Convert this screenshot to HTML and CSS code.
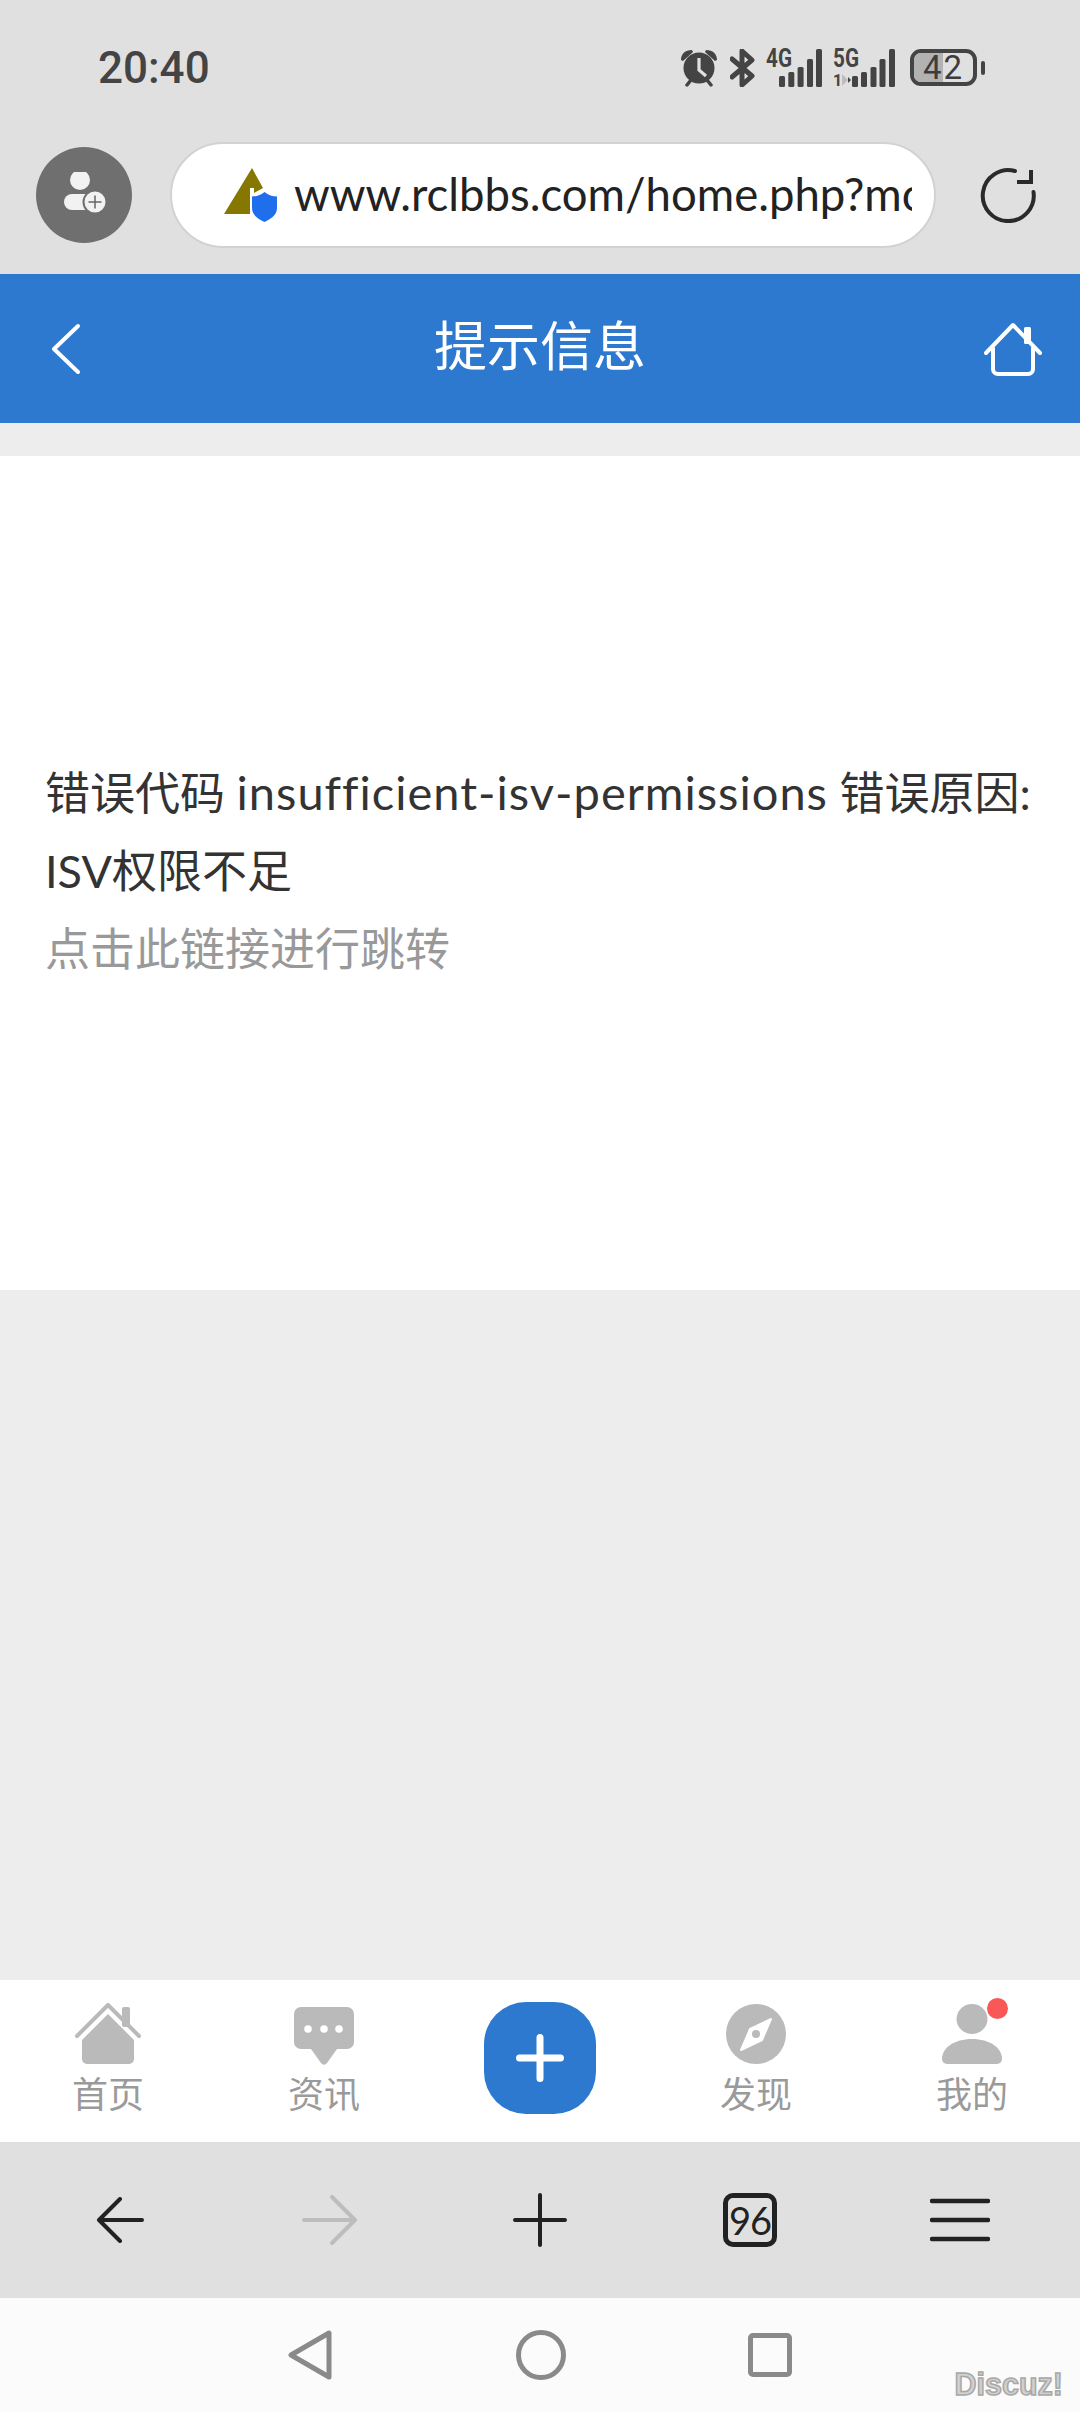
FILE: index.html
```html
<!DOCTYPE html>
<html lang="zh-CN">
<head>
<meta charset="utf-8">
<title>提示信息</title>
<link rel="stylesheet" href="styles.css">
</head>
<body>
<div class="screen">
  <header class="chrome">
    <div class="status">
      <span class="time">20:40</span>
      <div class="status-icons">
        <svg class="i-alarm" width="38" height="38" viewBox="0 0 38 38"><circle cx="19" cy="19" r="15.500" fill="#444"/><path d="M1 11C1 5 5 1 12 1L13 3L3 12ZM37 11C37 5 33 1 26 1L25 3L35 12Z" fill="#444"/><path d="M7 36l4-5M31 36l-4-5" stroke="#444" stroke-width="3.500" stroke-linecap="round"/><path d="M19 9V21L26 27" fill="none" stroke="#e0e0e0" stroke-width="3.200"/></svg>
        <svg width="25" height="38" viewBox="0 0 25 38"><path d="M2 10L22 27L12 36V2L22 11L2 28" fill="none" stroke="#444" stroke-width="5" stroke-linejoin="round" stroke-linecap="round"/></svg>
        <svg class="i-net" width="56" height="38" viewBox="0 0 56 38"><text x="0" y="18" class="net-label" textLength="26" lengthAdjust="spacingAndGlyphs">4G</text><rect x="13" y="27" width="6" height="11" rx="1.500"/><rect x="22.300" y="23" width="6" height="15" rx="1.500"/><rect x="31.600" y="18" width="6" height="20" rx="1.500"/><rect x="41" y="10" width="6" height="28" rx="1.500"/><rect x="50" y="0" width="6" height="38" rx="1.500"/></svg>
        <svg class="i-net" width="62" height="38" viewBox="0 0 62 38"><text x="0" y="18" class="net-label" textLength="26" lengthAdjust="spacingAndGlyphs">5G</text><text x="0" y="37" class="net-sub">1</text><path d="M9 25l6 6-6 6z" fill="#bdbdbd"/><path d="M15 28l3 3-3 3z" fill="#444"/><rect x="19" y="27" width="6" height="11" rx="1.500"/><rect x="28" y="23" width="6" height="15" rx="1.500"/><rect x="37.500" y="18" width="6" height="20" rx="1.500"/><rect x="46.500" y="10" width="6" height="28" rx="1.500"/><rect x="56" y="0" width="6" height="38" rx="1.500"/></svg>
        <div class="battery">
          <div class="battery-body"><span class="battery-fill"></span><span class="battery-num">42</span></div>
          <span class="battery-nub"></span>
        </div>
      </div>
    </div>
    <div class="urlrow">
      <div class="avatar">
        <svg width="48" height="46" viewBox="0 0 48 46"><circle cx="20" cy="8" r="10" fill="#f2f2f2"/><rect x="4" y="22" width="30" height="16" rx="8" fill="#f2f2f2"/><circle cx="35" cy="30" r="11.500" fill="#f2f2f2" stroke="#6f6f6f" stroke-width="2"/><path d="M35 23.500v13M28.500 30h13" stroke="#666" stroke-width="1.500"/></svg>
      </div>
      <div class="pill">
        <svg class="favicon" width="54" height="56" viewBox="0 0 54 56"><path d="M28 0L39 20L30 25V20H26V46H0Z" fill="#857700"/><path d="M40.500 24C44 27 49 28.500 53 28.500V40C53 47 47 51 40.500 54C34 51 28 47 28 40V28.500C32 28.500 37 27 40.500 24Z" fill="#1f6fec"/></svg>
        <span class="url">www.rclbbs.com/home.php?mod</span>
      </div>
      <svg class="reload" width="56" height="56" viewBox="0 0 56 56"><path d="M35 4A25.500 25.500 0 1 0 53.500 25" fill="none" stroke="#2a2a2a" stroke-width="4" stroke-linecap="round"/><path d="M37 15H51V3" fill="none" stroke="#2a2a2a" stroke-width="4"/></svg>
    </div>
  </header>

  <div class="appbar">
    <svg class="appbar-back" width="30" height="52" viewBox="0 0 30 52"><path d="M27 3L3 26L27 49" fill="none" stroke="#fff" stroke-width="4" stroke-linecap="round" stroke-linejoin="round"/></svg>
    <h1 class="title">提示信息</h1>
    <svg class="appbar-home" width="58" height="54" viewBox="0 0 58 54"><path d="M2 31L29 3L56 31M9 26V47a5 5 0 0 0 5 5H44a5 5 0 0 0 5-5V26" fill="none" stroke="#fff" stroke-width="4" stroke-linecap="round" stroke-linejoin="round"/><rect x="40" y="5" width="7" height="17" rx="1.500" fill="#fff"/></svg>
  </div>

  <main class="content">
    <section class="message">
      <p class="msg-text">错误代码 <span class="latin">insufficient-isv-permissions</span> 错误原因: ISV权限不足</p>
      <a class="msg-link">点击此链接进行跳转</a>
    </section>
  </main>

  <nav class="tabs">
    <div class="tab">
      <svg width="66" height="62" viewBox="0 0 66 62"><path d="M2 33L33 2L64 33" fill="none" stroke="#bababa" stroke-width="4" stroke-linecap="round" stroke-linejoin="round"/><rect x="47" y="4" width="8" height="20" rx="2" fill="#bababa"/><path d="M33 11L59 37V56a5 5 0 0 1-5 5H12a5 5 0 0 1-5-5V37Z" fill="#bababa"/></svg>
      <span class="tab-label">首页</span>
    </div>
    <div class="tab">
      <svg width="62" height="62" viewBox="0 0 62 62"><path d="M8 4H54a7 7 0 0 1 7 7V39a7 7 0 0 1-7 7H44L34 60a3.500 3.500 0 0 1-6 0L18 46H8a7 7 0 0 1-7-7V11a7 7 0 0 1 7-7Z" fill="#bababa"/><circle cx="15" cy="26" r="3.800" fill="#fff"/><circle cx="31" cy="26" r="3.800" fill="#fff"/><circle cx="46" cy="26" r="3.800" fill="#fff"/></svg>
      <span class="tab-label">资讯</span>
    </div>
    <div class="tab tab-plus">
      <div class="plus-btn"><svg width="48" height="48" viewBox="0 0 48 48"><path d="M3.500 24H44.500M24 3.500V44.500" stroke="#fff" stroke-width="7" stroke-linecap="round"/></svg></div>
    </div>
    <div class="tab">
      <svg width="62" height="62" viewBox="0 0 62 62"><circle cx="31" cy="31" r="30" fill="#bababa"/><path d="M46 16L37 37L16 47L25 26Z" fill="#fff" stroke="#fff" stroke-width="2" stroke-linejoin="round"/><circle cx="31" cy="31" r="4" fill="#bababa"/></svg>
      <span class="tab-label">发现</span>
    </div>
    <div class="tab tab-me">
      <svg width="62" height="62" viewBox="0 0 62 62"><ellipse cx="31" cy="16" rx="15.500" ry="15"/><path d="M1 56C1 45 13 36 31 36S61 45 61 56a5 5 0 0 1-5 5H6a5 5 0 0 1-5-5Z"/></svg>
      <span class="badge"></span>
      <span class="tab-label">我的</span>
    </div>
  </nav>

  <div class="toolbar">
    <div class="tool"><svg width="48" height="46" viewBox="0 0 48 46"><path d="M46 23H3M24 2L3 23L24 44" fill="none" stroke="#222" stroke-width="4" stroke-linecap="round" stroke-linejoin="round"/></svg></div>
    <div class="tool"><svg width="56" height="50" viewBox="0 0 56 50"><path d="M2 25H53M30 2L53 25L30 48" fill="none" stroke="#bdbdbd" stroke-width="4" stroke-linecap="round" stroke-linejoin="round"/></svg></div>
    <div class="tool"><svg width="54" height="54" viewBox="0 0 54 54"><path d="M2 27H52M27 2V52" stroke="#222" stroke-width="4" stroke-linecap="round"/></svg></div>
    <div class="tool"><div class="tabcount">96</div></div>
    <div class="tool"><svg width="60" height="44" viewBox="0 0 60 44"><path d="M2 3H58M2 22H58M2 41H58" stroke="#222" stroke-width="4.500" stroke-linecap="round"/></svg></div>
  </div>

  <div class="sysnav">
    <svg width="44" height="50" viewBox="0 0 44 50"><path d="M41 3V47L3 25Z" fill="none" stroke="#8a8a8a" stroke-width="5" stroke-linejoin="round"/></svg>
    <svg class="nav-home" width="50" height="50" viewBox="0 0 50 50"><circle cx="25" cy="25" r="22.500" fill="none" stroke="#8a8a8a" stroke-width="5"/></svg>
    <svg class="nav-recent" width="44" height="44" viewBox="0 0 44 44"><rect x="2.500" y="2.500" width="39" height="39" rx="2.500" fill="none" stroke="#8a8a8a" stroke-width="5"/></svg>
    <span class="watermark">Discuz!</span>
  </div>
</div>
</body>
</html>
```

FILE: styles.css
```css
* { box-sizing: border-box; }
html, body { margin: 0; padding: 0; }
body { width: 1080px; height: 2412px; overflow: hidden; font-family: "Lato", "Noto Sans CJK SC", sans-serif; background: #ededed; }
.screen { display: flex; flex-direction: column; width: 1080px; height: 2412px; position: relative; }

.chrome { height: 274px; background: #e0e0e0; display: flex; flex-direction: column; }
.status { height: 143px; padding: 49px 95px 0 98px; display: flex; justify-content: space-between; align-items: flex-start; flex: none; }
.time { font: 500 44px/38px "Roboto", sans-serif; color: #444; }
.status-icons { display: flex; align-items: flex-start; gap: 11px; }
.i-alarm { margin-right: 1px; }
.i-net { fill: #444; overflow: visible; }
.net-label { font: 700 25px "Roboto", sans-serif; fill: #444; }
.net-sub { font: 700 16px "Roboto", sans-serif; fill: #444; }
.battery { display: flex; align-items: center; gap: 4px; margin-left: 4px; }
.battery-body { width: 67px; height: 37px; border: 4px solid #444; border-radius: 11px; position: relative; display: flex; align-items: center; justify-content: center; }
.battery-fill { position: absolute; left: 0; top: 0; bottom: 0; width: 29px; background: #b2b2b2; border-radius: 7px 0 0 7px; }
.battery-num { position: relative; font: 400 33px/1 "Roboto", sans-serif; color: #3c3c3c; letter-spacing: 2px; }
.battery-nub { width: 4px; height: 14px; background: #444; border-radius: 2px; }

.urlrow { height: 104px; flex: none; display: flex; align-items: center; padding-left: 36px; }
.avatar { width: 96px; height: 96px; border-radius: 50%; background: #6f6f6f; display: flex; align-items: center; justify-content: center; flex: none; }
.pill { width: 766px; height: 106px; margin-left: 38px; background: #fff; border-radius: 53px; border: 2px solid #d2d2d2; display: flex; align-items: center; padding: 0 22px 0 52px; flex: none; }
.favicon { flex: none; margin-top: 2px; }
.url { font-size: 45.500px; line-height: 60px; color: #222; margin: 0 0 2px 16px; white-space: nowrap; overflow: hidden; flex: 1; min-width: 0; }
.reload { margin-left: 44px; flex: none; }

.appbar { height: 149px; background: #2c79cf; display: grid; grid-template-columns: 1fr auto 1fr; align-items: center; padding: 0 45px; color: #fff; }
.appbar-back { margin-left: 6px; }
.appbar-home { justify-self: end; margin-right: -7px; }
.title { margin: 0 0 12px; font-weight: 400; font-size: 53px; line-height: 60px; font-family: "Noto Sans CJK SC", sans-serif; }

.content { flex: 1; padding-top: 33px; background: #ededed; display: flex; flex-direction: column; }
.message { height: 834px; background: #fff; padding: 0 30px 6px 45px; display: flex; flex-direction: column; justify-content: center; font-size: 45px; line-height: 78px; }
.msg-text { margin: 0; color: #333; }
.latin { font-size: 47px; letter-spacing: 1px; }
.msg-link { color: #999; }

.tabs { height: 162px; background: #fff; display: grid; grid-template-columns: repeat(5, 216px); }
.tab { display: flex; flex-direction: column; align-items: center; padding-top: 23px; position: relative; }
.tab-label { font: 400 36px/40px "Noto Sans CJK SC", sans-serif; color: #9a9a9a; margin-top: 7px; }
.tab-plus { padding-top: 22px; }
.plus-btn { width: 112px; height: 112px; border-radius: 42px; background: #2c79cf; display: flex; align-items: center; justify-content: center; }
.tab-me svg { fill: #bababa; }
.badge { position: absolute; left: 123px; top: 18px; width: 21px; height: 21px; border-radius: 50%; background: #fa5757; }

.toolbar { height: 156px; background: #e0e0e0; padding: 0 15px; display: grid; grid-template-columns: repeat(5, 210px); align-items: center; }
.tool { display: flex; justify-content: center; align-items: center; }
.tabcount { width: 54px; height: 54px; border: 5px solid #222; border-radius: 10px; font: 400 38px/44px "Lato", sans-serif; color: #222; text-align: center; letter-spacing: -1px; }

.sysnav { height: 114px; background: #fbfbfb; display: flex; align-items: center; justify-content: center; gap: 183px; position: relative; }
.nav-home { margin-left: 1px; }
.nav-recent { margin-left: -1px; }
.watermark { position: absolute; right: 17px; bottom: 12px; font: 700 30.500px/32px "Liberation Sans", sans-serif; color: #d0d0d0; -webkit-text-stroke: 1.500px #a8a8a8; }
```
